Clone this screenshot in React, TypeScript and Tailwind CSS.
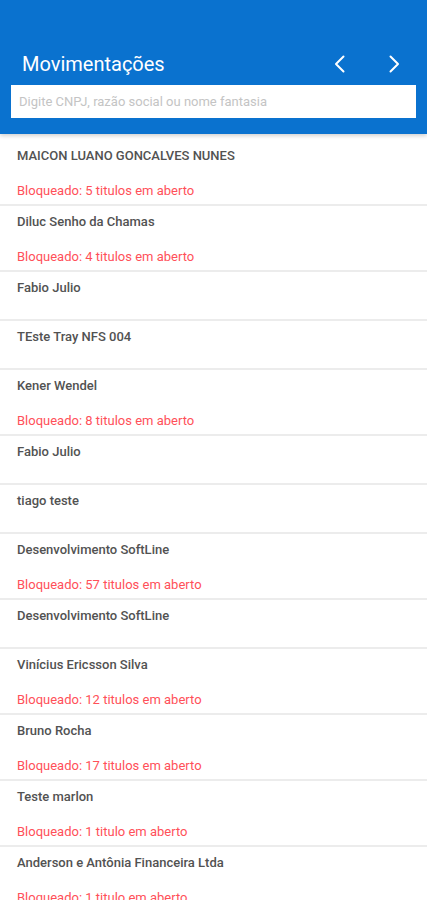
import React from 'react';

interface Cliente {
  nome: string;
  bloqueio?: string;
}

const clientes: Cliente[] = [
  { nome: 'MAICON LUANO GONCALVES NUNES', bloqueio: 'Bloqueado: 5 titulos em aberto' },
  { nome: 'Diluc Senho da Chamas', bloqueio: 'Bloqueado: 4 titulos em aberto' },
  { nome: 'Fabio Julio' },
  { nome: 'TEste Tray NFS 004' },
  { nome: 'Kener Wendel', bloqueio: 'Bloqueado: 8 titulos em aberto' },
  { nome: 'Fabio Julio' },
  { nome: 'tiago teste' },
  { nome: 'Desenvolvimento SoftLine', bloqueio: 'Bloqueado: 57 titulos em aberto' },
  { nome: 'Desenvolvimento SoftLine' },
  { nome: 'Vinícius Ericsson Silva', bloqueio: 'Bloqueado: 12 titulos em aberto' },
  { nome: 'Bruno Rocha', bloqueio: 'Bloqueado: 17 titulos em aberto' },
  { nome: 'Teste marlon', bloqueio: 'Bloqueado: 1 titulo em aberto' },
  { nome: 'Anderson e Antônia Financeira Ltda', bloqueio: 'Bloqueado: 1 titulo em aberto' },
];

const Chevron: React.FC<{ dir: 'left' | 'right' }> = ({ dir }) => (
  <svg width="16" height="18" viewBox="0 0 16 18" fill="none">
    <polyline
      points={dir === 'left' ? '11.5,1.5 4,9 11.5,16.5' : '4.5,1.5 12,9 4.5,16.5'}
      stroke="white"
      strokeWidth="2"
      strokeLinecap="round"
      strokeLinejoin="round"
    />
  </svg>
);

const ClienteRow: React.FC<{ cliente: Cliente }> = ({ cliente }) => (
  <div className="bg-white pl-[17px] pt-[8px] pb-[6px] border-b-2 border-[#ececec]">
    <div className="text-[13px] leading-[15px] font-medium text-[#525252]">{cliente.nome}</div>
    {cliente.bloqueio ? (
      <div className="mt-[20px] text-[13px] leading-[15px] text-[#ff5059]">{cliente.bloqueio}</div>
    ) : (
      <div className="h-[18px]" />
    )}
  </div>
);

export default function App() {
  return (
    <div className="w-[427px] h-[900px] overflow-hidden bg-white" style={{ fontFamily: 'Roboto, "Noto Sans", sans-serif' }}>
      <header className="bg-[#0a72cf] pt-[50px] pb-[16px] px-[11px] shadow-[0_2px_4px_rgba(0,0,0,0.18)] relative z-10">
        <div className="h-7 flex items-center pl-[11px] pr-[14px]">
          <h1 className="flex-1 text-white text-[20px]">Movimentações</h1>
          <div className="flex items-center gap-[38px]">
            <Chevron dir="left" />
            <Chevron dir="right" />
          </div>
        </div>
        <div className="mt-[7px] h-[33px] bg-white flex items-center px-2">
          <span className="text-[13px] text-[#c4c4c4]">Digite CNPJ, razão social ou nome fantasia</span>
        </div>
      </header>
      <div className="pt-[6px]">
        {clientes.map((c, i) => (
          <ClienteRow key={i} cliente={c} />
        ))}
      </div>
    </div>
  );
}
